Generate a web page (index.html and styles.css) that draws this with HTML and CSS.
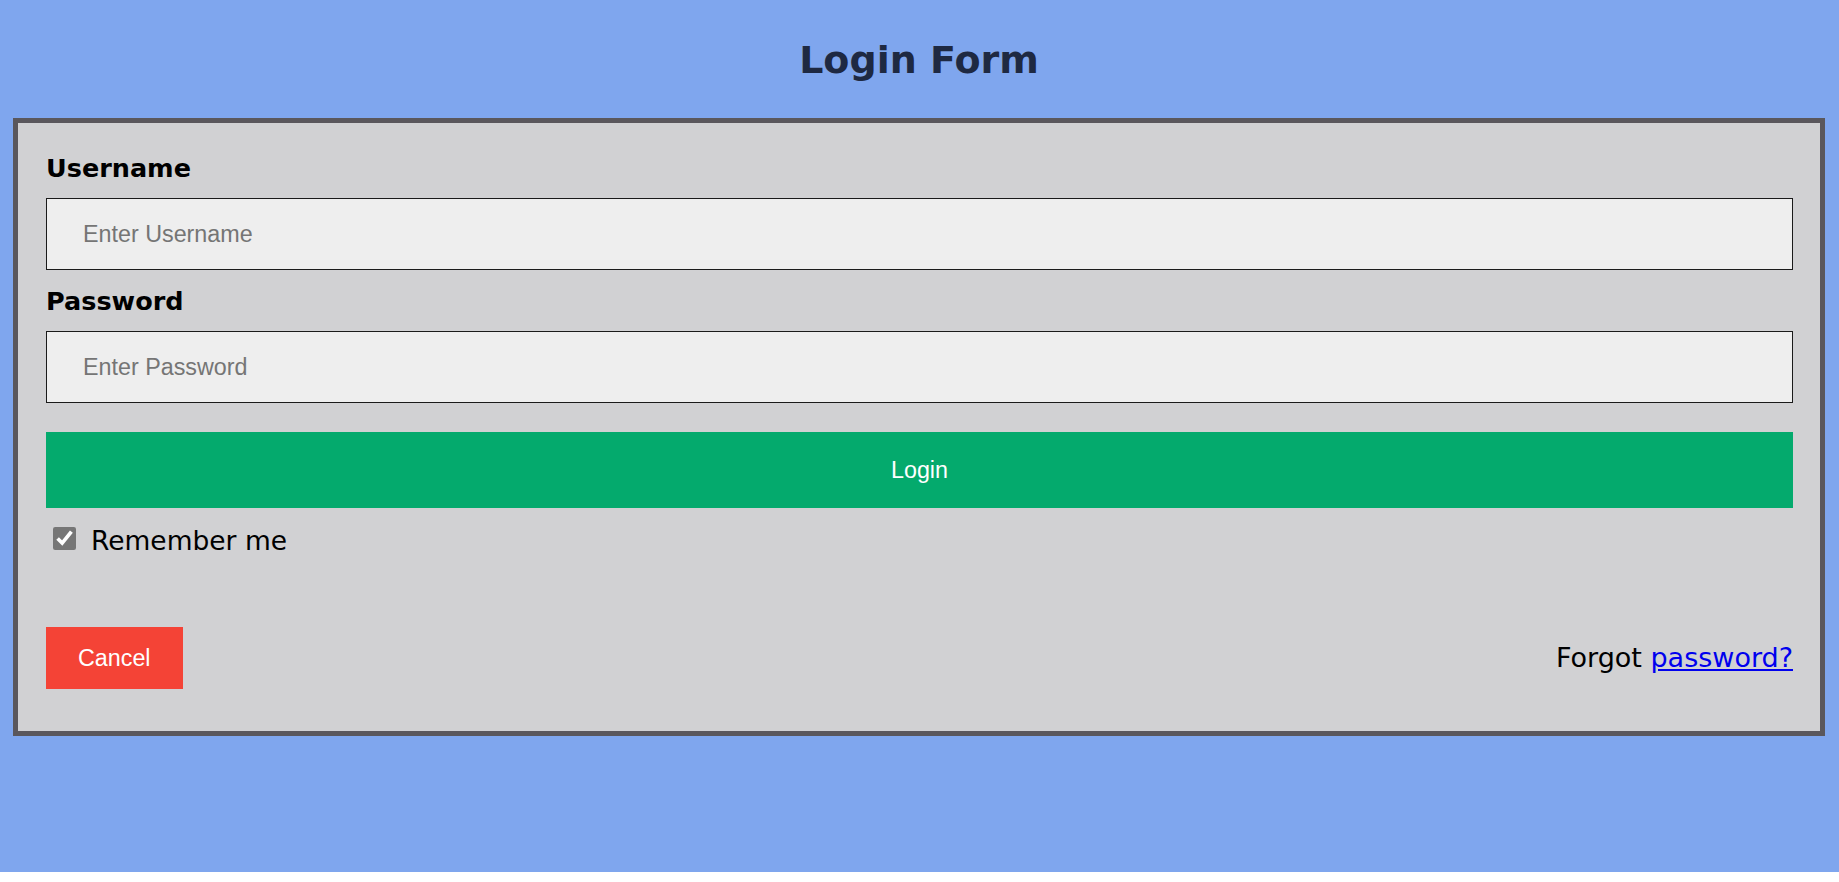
FILE: index.html
```html
<!DOCTYPE html>
<html lang="en">
<head>
<meta charset="utf-8">
<title>Login Form</title>
<link rel="stylesheet" href="styles.css">
</head>
<body>
<div class="page">
  <h1 class="title">Login Form</h1>
  <form class="box" onsubmit="return false">
    <label class="label" for="uname">Username</label>
    <input class="field" id="uname" type="text" placeholder="Enter Username">
    <label class="label" for="psw">Password</label>
    <input class="field field-last" id="psw" type="password" placeholder="Enter Password">
    <button class="login" type="submit">Login</button>
    <label class="remember"><input class="check" type="checkbox" checked>Remember me</label>
    <div class="footer">
      <button class="cancel" type="button">Cancel</button>
      <span class="forgot">Forgot <a href="#">password?</a></span>
    </div>
  </form>
</div>
</body>
</html>
```

FILE: styles.css
```css
html, body {
  margin: 0;
  padding: 0;
  background: #ffffff;
}

.page {
  height: 872px;
  box-sizing: border-box;
  background: #7fa6ee;
  padding: 37px 14px 0 13px;
  display: flex;
  flex-direction: column;
  font-family: "DejaVu Sans", sans-serif;
  color: #000;
}

.title {
  margin: 0 0 35px;
  font-size: 38px;
  line-height: 46px;
  font-weight: bold;
  text-align: center;
  color: #1e2942;
}

.box {
  display: flex;
  flex-direction: column;
  align-items: stretch;
  background: #d1d1d3;
  border: 5px solid #5a575c;
  padding: 30px 27px 42px 28px;
}

.label {
  font-size: 25.5px;
  font-weight: bold;
  line-height: 30px;
}

.field {
  box-sizing: border-box;
  height: 72px;
  margin: 15px 0 16px;
  padding: 0 36px;
  border: 1px solid #1a1a1a;
  background: #eeeeee;
  font-family: "Liberation Sans", Arial, sans-serif;
  font-size: 23.3px;
  color: #000;
  outline: none;
}

.field::placeholder {
  color: #757575;
}

.field-last {
  margin-bottom: 29px;
}

.login {
  height: 76px;
  margin: 0 0 17px;
  border: none;
  background: #04aa6d;
  color: #ffffff;
  font-family: "Liberation Sans", Arial, sans-serif;
  font-size: 23.3px;
  cursor: pointer;
}

.remember {
  display: flex;
  align-items: flex-start;
  font-size: 26.5px;
  line-height: 31px;
}

.check {
  width: 23px;
  height: 23px;
  margin: 2px 15px 0 7px;
  accent-color: #767676;
}

.footer {
  display: flex;
  justify-content: space-between;
  align-items: flex-start;
  margin-top: 71px;
}

.cancel {
  border: none;
  background: #f44336;
  color: #ffffff;
  font-family: "Liberation Sans", Arial, sans-serif;
  font-size: 23.3px;
  line-height: 27px;
  padding: 17.5px 32px;
  cursor: pointer;
}

.forgot {
  margin-top: 15px;
  font-size: 27px;
  line-height: 31px;
}

.forgot a {
  color: #0000ee;
}
```
